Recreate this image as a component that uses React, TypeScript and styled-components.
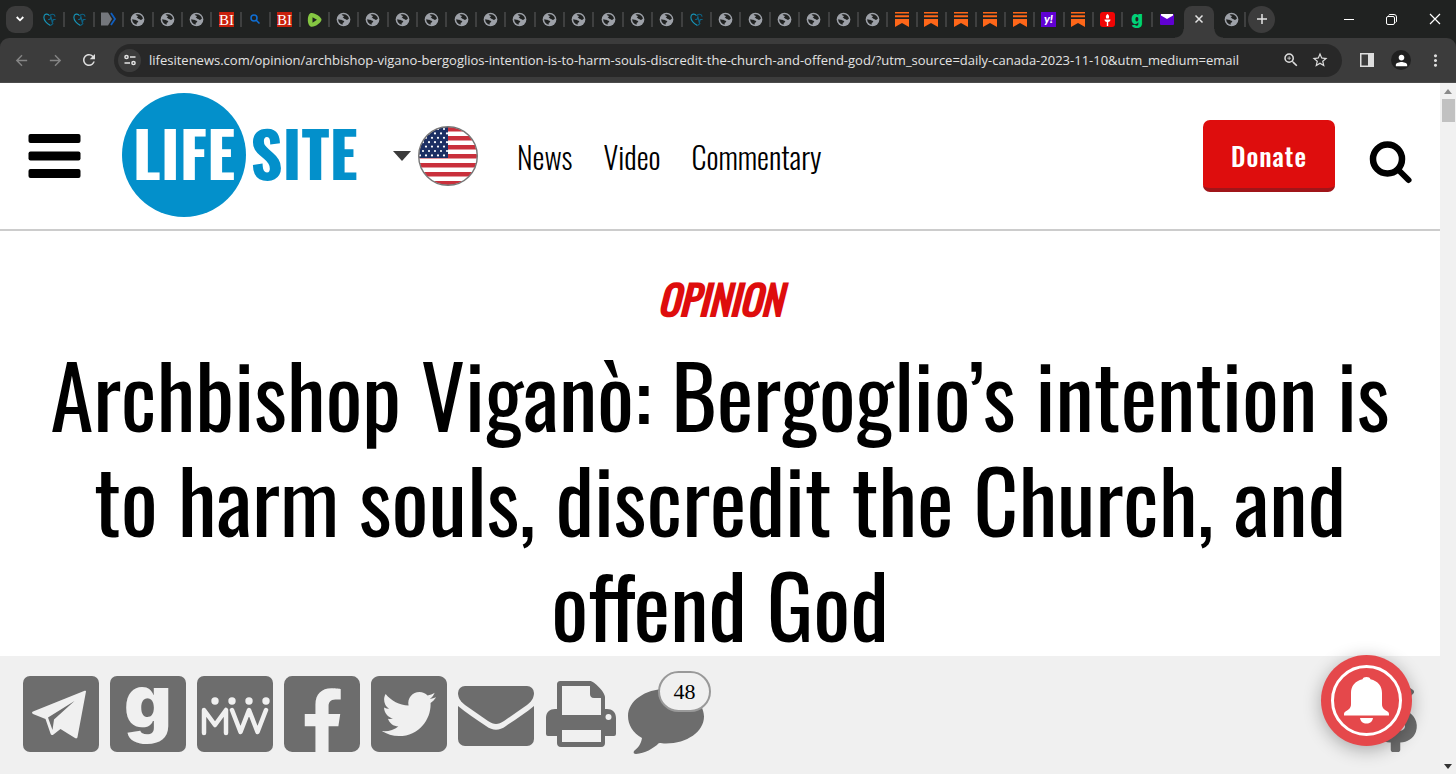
import React from "react";
import styled, { createGlobalStyle } from "styled-components";
import { FaFacebookSquare, FaTwitterSquare, FaDollarSign } from "react-icons/fa";
import { MdArrowBack, MdArrowForward, MdRefresh, MdStarBorder, MdZoomIn, MdMoreVert, MdPerson } from "react-icons/md";

const condensed = `Oswald, "Roboto Condensed", "Liberation Sans Narrow", "Arial Narrow", sans-serif`;
const ink = "#6d6d6d";
const paper = "#f0f0f0";

const GlobalStyle = createGlobalStyle`
  *, *::before, *::after { box-sizing: border-box; }
  body { margin: 0; background: #fff; color: #000; font-family: ${condensed}; }
  button { font: inherit; border: 0; padding: 0; background: none; color: inherit; cursor: pointer; }
  svg { display: block; overflow: visible; }
`;

const Window = styled.div`
  display: flex;
  flex-direction: column;
  height: 100vh;
  overflow: hidden;
`;

/* ---------- browser chrome ---------- */

const TabStrip = styled.div`
  display: flex;
  align-items: center;
  height: 38px;
  padding-left: 6px;
  background: #202221;
  color: #e3e3e3;
`;

const RoundButton = styled.button<{ $shape?: string }>`
  display: grid;
  place-items: center;
  flex: none;
  width: 27px;
  height: 27px;
  border-radius: ${(p) => p.$shape ?? "50%"};
  background: #3c3c3c;
`;

const TabRow = styled.div`
  display: flex;
  flex: 1;
  min-width: 0;
  margin: 0 2px 0 3px;
`;

const Tab = styled.button<{ $last?: boolean }>`
  display: grid;
  place-items: center;
  flex: 1 1 0;
  min-width: 0;
  height: 15px;
  border-right: 2px solid ${(p) => (p.$last ? "transparent" : "#3f4040")};
`;

const ActiveTab = styled.div`
  position: relative;
  display: grid;
  place-items: center;
  flex: none;
  align-self: flex-end;
  width: 30px;
  height: 32px;
  padding-bottom: 6px;
  border-radius: 8px 8px 0 0;
  background: #3c3c3c;
  &::before, &::after {
    content: "";
    position: absolute;
    bottom: 0;
    width: 9px;
    height: 9px;
  }
  &::before { right: 100%; background: radial-gradient(circle at 0 0, transparent 8px, #3c3c3c 9px); }
  &::after { left: 100%; background: radial-gradient(circle at 100% 0, transparent 8px, #3c3c3c 9px); }
`;

const TrailingTab = styled(Tab)`
  flex: none;
  width: 32px;
  padding-left: 4px;
  margin-right: 2px;
`;

const WindowControls = styled.div`
  display: flex;
  margin-left: 52px;
`;

const WindowControl = styled.button`
  display: grid;
  place-items: center;
  width: 43px;
  height: 38px;
`;

const ToolbarBack = styled.div`
  background: #202221;
`;

const Toolbar = styled.div`
  display: flex;
  align-items: center;
  height: 45px;
  padding: 0 4px 0 9px;
  border-radius: 9px 9px 0 0;
  border-bottom: 1px solid #4b4b4b;
  background: #3c3c3c;
  color: #dedede;
`;

const ToolButton = styled.button<{ $dim?: boolean; $wide?: boolean }>`
  display: grid;
  place-items: center;
  flex: none;
  width: ${(p) => (p.$wide ? "34px" : "24px")};
  height: 34px;
  color: ${(p) => (p.$dim ? "#858585" : "#dedede")};
`;

const NavTools = styled.div`
  display: flex;
  gap: 10px;
  margin-right: 13px;
`;

const AddressBar = styled.form`
  display: flex;
  align-items: center;
  flex: 1;
  min-width: 0;
  height: 33px;
  margin-right: 8px;
  padding: 0 10px 0 4px;
  border-radius: 17px;
  background: #282828;
`;

const SiteInfo = styled.button`
  display: grid;
  place-items: center;
  flex: none;
  width: 23px;
  height: 23px;
  border-radius: 50%;
  background: #3c3c3c;
`;

const AddressInput = styled.input`
  flex: 1;
  min-width: 0;
  margin-left: 8px;
  padding: 0;
  border: 0;
  outline: 0;
  background: none;
  color: #e3e3e3;
  font: 13px/20px "Open Sans", "Noto Sans", sans-serif;
`;

const Avatar = styled.span`
  display: grid;
  place-items: center;
  width: 20px;
  height: 20px;
  border-radius: 50%;
  background: #202020;
  color: #fff;
`;

/* ---------- page ---------- */

const Viewport = styled.div`
  display: grid;
  grid-template-columns: minmax(0, 1fr) 16px;
  flex: 1;
  min-height: 0;
`;

const Page = styled.div`
  display: flex;
  flex-direction: column;
  min-height: 0;
`;

const Scrollbar = styled.div`
  display: flex;
  flex-direction: column;
  align-items: center;
  padding: 6px 0 5px;
  background: #f1f1f1;
`;

const Thumb = styled.div`
  width: 13px;
  height: 23px;
  margin-top: 5px;
  margin-bottom: auto;
  background: #c1c1c1;
`;

const Header = styled.header`
  display: flex;
  align-items: center;
  flex: none;
  height: 148px;
  padding: 0 28px;
  border-bottom: 2px solid #ccc;
`;

const MenuButton = styled.button`
  margin-right: 41px;
`;

const RegionButton = styled.button`
  display: flex;
  align-items: center;
  gap: 7px;
  margin: 0 39px 0 33px;
`;

const MainNav = styled.nav`
  display: flex;
  gap: 31px;
  margin-right: auto;
  padding-top: 2px;
  font-size: 30px;
  line-height: 40px;
  font-weight: 300;
  a { color: #000; text-decoration: none; }
`;

const Donate = styled.button`
  width: 132px;
  height: 72px;
  margin-right: 34px;
  padding-top: 4px;
  border-radius: 7px;
  border-bottom: 4px solid #a01519;
  background: #de0d0d;
  color: #fff;
  font-size: 26px;
  line-height: 40px;
  font-weight: 500;
  letter-spacing: 1px;
`;

const SearchButton = styled.button`
  padding-top: 12px;
`;

const Article = styled.main`
  flex: 1;
  min-height: 0;
  overflow: hidden;
  padding: 39px 24px 0;
  text-align: center;
`;

const Category = styled.p`
  margin: 0;
  color: #de0d0d;
  font-size: 40px;
  line-height: 56px;
  font-weight: 400;
  font-style: italic;
  -webkit-text-stroke: 2px #de0d0d;
`;

const Headline = styled.h1`
  margin: 14px 0 0;
  font-size: 87px;
  line-height: 105px;
  font-weight: 400;
`;

const ShareBar = styled.footer`
  position: relative;
  display: flex;
  align-items: center;
  gap: 11px;
  flex: none;
  height: 118px;
  padding: 0 23px 2px;
  background: ${paper};
  color: ${ink};
  a { color: inherit; }
`;

const CommentLink = styled.a`
  position: relative;
  padding-top: 14px;
`;

const Count = styled.span`
  position: absolute;
  top: -3px;
  left: 30px;
  width: 53px;
  border: 2px solid #999;
  border-radius: 21px;
  background: ${paper};
  color: #000;
  text-align: center;
  font: 22px/37px "Liberation Serif", serif;
`;

const DonateLink = styled.a`
  margin-left: auto;
  svg { width: 43px; }
`;

const BellButton = styled.button`
  position: absolute;
  right: 28px;
  bottom: 28px;
  width: 91px;
  height: 91px;
  border-radius: 50%;
  background: #e5484b;
  box-shadow: 0 4px 18px rgba(0, 0, 0, 0.3);
`;

/* ---------- favicons ---------- */

const Globe = () => (
  <svg width="15" height="15" viewBox="0 0 16 16">
    <circle cx="8" cy="8" r="7.300" fill="#9da1a8" />
    <path d="M6 3C9 1.600 13.200 3.400 13.800 7l-1.500 1.300c-1 .4-1.800-.2-2.600-.8-.8-.5-2-.2-2.400-1-.3-.8 1.300-1.200 1-2C8 3.800 6.800 3.800 6 3zM2.300 7.800c1.700.6 3 .2 4.300 1 .8.5 2.400.6 2.200 1.700-.2.9-1.500.8-1.700 1.700l-.1 1.500C4.200 13 2.300 10.800 2.300 7.800z" fill="#202221" />
  </svg>
);

const Heart = () => (
  <svg width="15" height="15" viewBox="0 0 16 16" fill="none" strokeWidth="1.200">
    <path d="M9 14.500C5 12 2 9 2 5.500 2 2 6 1 8 4" stroke="#1795b8" />
    <path d="M8 4c1.500-2.300 5.500-2.300 6 1M6.500 8h2l1-3 1.500 6.500L12 8h2.500M9 14.500l3-2.500" stroke="#0d6385" />
  </svg>
);

const Tag = () => (
  <svg width="16" height="14" viewBox="0 0 16 14">
    <path d="M1 .5h7L12 7l-4 6.500H1z" fill="#74777c" />
    <path d="M11 1l4 6-4 6" fill="none" stroke="#0f5fc0" strokeWidth="1.800" />
  </svg>
);

const BI = () => (
  <svg width="15" height="15" viewBox="0 0 15 15">
    <rect width="15" height="15" fill="#c8200c" />
    <text x="7.500" y="12.500" textAnchor="middle" fontFamily="Liberation Serif, serif" fontWeight="400" fontSize="15" fill="#fff">BI</text>
  </svg>
);

const SearchFav = () => (
  <svg width="10" height="10" viewBox="0 0 10 10" fill="none" stroke="#0f6fd6" strokeWidth="1.500">
    <circle cx="4" cy="4" r="3" />
    <path d="M6.200 6.200L9.500 9.500" />
  </svg>
);

const Rumble = () => (
  <svg width="15" height="16" viewBox="0 0 15 16">
    <path d="M3 1.500C6-.5 14 4.500 14.500 7.500c.3 3-7.500 8.500-11 7C0 13 0 3.500 3 1.500z" fill="#85c742" />
    <path d="M5.500 5.200L10 7.800l-4.500 3z" fill="#202221" />
  </svg>
);

const Substack = () => (
  <svg width="14" height="15" viewBox="0 0 14 15" fill="#ff6719">
    <path d="M0 0h14v1.500H0zM0 3.200h14v2H0zM0 7h14v8l-7-4-7 4z" />
  </svg>
);

const Yahoo = () => (
  <svg width="15" height="15" viewBox="0 0 15 15">
    <rect width="15" height="15" fill="#6001d2" />
    <text x="7.500" y="11" textAnchor="middle" fontFamily="Lato, sans-serif" fontWeight="900" fontStyle="italic" fontSize="12" fill="#fff">y!</text>
  </svg>
);

const Torch = () => (
  <svg width="15" height="15" viewBox="0 0 15 15">
    <rect width="15" height="15" rx="3" fill="#f00505" />
    <path d="M7.500 2c1.800 1.300 2 3 1.200 4.500H6.300C5.500 5 5.700 3.300 7.500 2zM4.500 7.500h6c0 1.500-1 2.300-2.300 2.600V14H6.800v-3.900C5.500 9.800 4.500 9 4.500 7.500z" fill="#fff" />
  </svg>
);

const GabFav = () => (
  <svg width="14" height="17" viewBox="0 0 14 17">
    <text x="7" y="12" textAnchor="middle" fontFamily="Inter, sans-serif" fontWeight="900" fontSize="18" fill="#00d177">g</text>
  </svg>
);

const MailFav = () => (
  <svg width="14" height="11" viewBox="0 0 14 11">
    <rect width="14" height="11" rx="1" fill="#6001d2" />
    <path d="M1 0h12v1.500L7 5 1 1.500z" fill="#fff" />
  </svg>
);

type Favicon = { label: string; Icon: () => React.JSX.Element };
const repeat = (n: number, item: Favicon) => Array.from({ length: n }, () => item);
const globe = { label: "Web page", Icon: Globe };
const heart = { label: "Heart page", Icon: Heart };
const bi = { label: "BI", Icon: BI };
const substack = { label: "Substack", Icon: Substack };

const tabs: Favicon[] = [
  heart,
  heart,
  { label: "Tag", Icon: Tag },
  ...repeat(3, globe),
  bi,
  { label: "Search", Icon: SearchFav },
  bi,
  { label: "Rumble", Icon: Rumble },
  ...repeat(12, globe),
  heart,
  ...repeat(6, globe),
  ...repeat(5, substack),
  { label: "Yahoo", Icon: Yahoo },
  substack,
  { label: "Torch", Icon: Torch },
  { label: "Gab", Icon: GabFav },
  { label: "Mail", Icon: MailFav },
];

/* ---------- page drawings ---------- */

const Logo = () => (
  <svg width="238" height="124" viewBox="0 0 238 124" role="img" aria-label="LifeSite">
    <circle cx="62" cy="61" r="62" fill="#0390cb" />
    <g fontFamily={condensed} fontWeight="700" fontSize="63">
      <text x="62" y="86" textAnchor="middle" fill="#fff">LIFE</text>
      <text x="182" y="86" textAnchor="middle" fill="#0390cb">SITE</text>
    </g>
  </svg>
);

const Flag = () => (
  <svg width="60" height="60" viewBox="0 0 60 60">
    <defs>
      <clipPath id="flag"><circle cx="30" cy="30" r="29" /></clipPath>
    </defs>
    <g clipPath="url(#flag)">
      <rect width="60" height="60" fill="#fff" />
      {[1, 10, 19, 28, 37, 46, 55].map((y) => (
        <rect key={y} y={y} width="60" height="4.500" fill="#c9303c" />
      ))}
      <rect width="30" height="32" fill="#1c2f63" />
      {[0, 1, 2, 3, 4, 5, 6].flatMap((r) =>
        [0, 1, 2, 3, 4].map((c) => (
          <circle key={`${r}-${c}`} cx={2 + c * 6 + (r % 2) * 3} cy={3 + r * 4.400} r="1.100" fill="#fff" />
        ))
      )}
    </g>
    <circle cx="30" cy="30" r="29.300" fill="none" stroke="#777" strokeWidth="1.400" />
  </svg>
);

const Telegram = () => (
  <svg width="76" height="76" viewBox="0 0 76 76">
    <rect width="76" height="76" rx="7" fill={ink} />
    <path d="M63 15.500L54.500 61c-.3 1.500-1.300 1.800-2.500 1.100L37.500 53l-7 5.500c-1.500 1-2.500.5-3-1L22.500 43 10 38c-1.300-.6-1.300-1.800 0-2.400L61 15c1.300-.5 2.200-.2 2 .500z" fill={paper} />
    <path d="M51.500 25L25 41.500l4.500 12.500L31 43.500z" fill={ink} />
  </svg>
);

const Gab = () => (
  <svg width="76" height="76" viewBox="0 0 76 76">
    <rect width="76" height="76" rx="7" fill={ink} />
    <text x="38" y="52" textAnchor="middle" fontFamily="Inter, sans-serif" fontWeight="900" fontSize="74" fill={paper}>g</text>
  </svg>
);

const MeWe = () => (
  <svg width="76" height="76" viewBox="0 0 76 76">
    <rect width="76" height="76" rx="7" fill={ink} />
    <g fill={paper}>
      <circle cx="18" cy="25" r="3.700" />
      <circle cx="35" cy="25" r="3.700" />
      <circle cx="52" cy="25" r="3.700" />
      <circle cx="69" cy="25" r="3.700" />
    </g>
    <path d="M7 57V34l11 15 11-15v23M35 34l8.500 22L52 34l8.500 22L69 34" fill="none" stroke={paper} strokeWidth="4.500" strokeLinecap="round" strokeLinejoin="round" />
  </svg>
);

const Envelope = () => (
  <svg width="76" height="64" viewBox="0 -4 76 64" fill={ink}>
    <path d="M7 0h62a7 7 0 0 1 7 7c0 5-3 9-7 12L46 35c-6 4-10 4-16 0L7 19C3 16 0 12 0 7a7 7 0 0 1 7-7z" />
    <path d="M0 20c8 7 18 13 28 20 7 5 13 5 20 0 10-7 20-13 28-20v33a7 7 0 0 1-7 7H7a7 7 0 0 1-7-7z" />
  </svg>
);

const Printer = () => (
  <svg width="72" height="66" viewBox="0 0 72 66">
    <path d="M16 0h29c4 0 15 11 15 16v12h2c5 0 9 3 9 9v16a2 2 0 0 1-2 2h-9v7c0 2-1 4-4 4H16c-3 0-4-2-4-4v-7H3a2 2 0 0 1-2-2V37c0-6 4-9 9-9h2V4c0-3 1-4 4-4z" fill={ink} />
    <path d="M17 5h28v8c0 2 1 4 4 4h7v17H17zM17 49h39v12H17z" fill={paper} />
    <circle cx="63.500" cy="36" r="3" fill={paper} />
  </svg>
);

const Comment = () => (
  <svg width="76" height="66" viewBox="0 0 76 66" fill={ink}>
    <path d="M38 1C17 1 0 13 0 28c0 9 5 17 14 22-1 6-4 10-8 13-1 2 0 3 2 3 9-1 17-5 23-11 2 .4 4 .4 7 .4 21 0 38-12 38-27S59 1 38 1z" />
  </svg>
);

const Bell = () => (
  <svg width="91" height="91" viewBox="0 0 91 91">
    <circle cx="45.500" cy="45.500" r="34" fill="none" stroke="#fff" strokeWidth="3" />
    <path d="M45.500 22c2.200 0 3.500.8 4 2.200C57 26 61 31 61 38v11c0 4 2 5.500 5.500 7.500 1.500 1 1.500 1.500 1.500 4H23c0-2.500 0-3 1.500-4C28 54.500 30 53 30 49V38c0-7 4-12 11.500-13.800.5-1.400 1.800-2.200 4-2.200zM39 63h13c-.8 4-3 5.500-6.500 5.500S39.800 67 39 63z" fill="#fff" />
  </svg>
);

export default function App() {
  return (
    <Window>
      <GlobalStyle />
      <TabStrip>
        <RoundButton $shape="9px" aria-label="Search tabs">
          <svg width="8" height="6" viewBox="0 0 8 6" fill="none" stroke="#fff" strokeWidth="1.800"><path d="M.7 1L4 4.300 7.300 1" /></svg>
        </RoundButton>
        <TabRow>
          {tabs.map(({ label, Icon }, i) => (
            <Tab key={i} aria-label={label} $last={i === tabs.length - 1}>
              <Icon />
            </Tab>
          ))}
        </TabRow>
        <ActiveTab>
          <button aria-label="Close tab">
            <svg width="8" height="8" viewBox="0 0 8 8" stroke="#e3e3e3" strokeWidth="1.500"><path d="M.5.500l7 7M7.500.500l-7 7" /></svg>
          </button>
        </ActiveTab>
        <TrailingTab aria-label="Web page"><Globe /></TrailingTab>
        <RoundButton aria-label="New tab">
          <svg width="10" height="10" viewBox="0 0 10 10" stroke="#e3e3e3" strokeWidth="1.500"><path d="M5 0v10M0 5h10" /></svg>
        </RoundButton>
        <WindowControls>
          <WindowControl aria-label="Minimize">
            <svg width="10" height="10" viewBox="0 0 10 10" stroke="#fff"><path d="M0 5.500h10" /></svg>
          </WindowControl>
          <WindowControl aria-label="Restore">
            <svg width="11" height="11" viewBox="0 0 11 11" fill="none" stroke="#fff"><rect x=".5" y="2.500" width="8" height="8" rx="1.500" /><path d="M2.500 1.500c.3-.7.800-1 1.500-1h4a2.500 2.500 0 0 1 2.500 2.500v4c0 .7-.3 1.200-1 1.500" /></svg>
          </WindowControl>
          <WindowControl aria-label="Close">
            <svg width="10" height="10" viewBox="0 0 10 10" stroke="#fff" strokeWidth="1.200"><path d="M0 0l10 10M10 0L0 10" /></svg>
          </WindowControl>
        </WindowControls>
      </TabStrip>
      <ToolbarBack>
        <Toolbar>
          <NavTools>
            <ToolButton $dim aria-label="Back"><MdArrowBack size={17} /></ToolButton>
            <ToolButton $dim aria-label="Forward"><MdArrowForward size={17} /></ToolButton>
            <ToolButton aria-label="Reload"><MdRefresh size={18} /></ToolButton>
          </NavTools>
          <AddressBar onSubmit={(e) => e.preventDefault()}>
            <SiteInfo type="button" aria-label="Site information">
              <svg width="12" height="12" viewBox="0 0 12 12" fill="none" stroke="#e3e3e3" strokeWidth="1.500"><circle cx="2.500" cy="3" r="1.600" /><path d="M6 3h5.500M.5 9H6" /><circle cx="9.500" cy="9" r="1.600" /></svg>
            </SiteInfo>
            <AddressInput aria-label="Address" defaultValue="lifesitenews.com/opinion/archbishop-vigano-bergoglios-intention-is-to-harm-souls-discredit-the-church-and-offend-god/?utm_source=daily-canada-2023-11-10&utm_medium=email" />
            <ToolButton type="button" $wide aria-label="Zoom"><MdZoomIn size={18} /></ToolButton>
            <ToolButton type="button" aria-label="Bookmark"><MdStarBorder size={18} /></ToolButton>
          </AddressBar>
          <ToolButton $wide aria-label="Side panel">
            <svg width="14" height="14" viewBox="0 0 14 14" fill="#dedede"><path d="M0 0h14v14H0zM1.500 1.500v11H8v-11z" fillRule="evenodd" /></svg>
          </ToolButton>
          <ToolButton $wide aria-label="Profile"><Avatar><MdPerson size={17} /></Avatar></ToolButton>
          <ToolButton $wide aria-label="Menu"><MdMoreVert size={19} /></ToolButton>
        </Toolbar>
      </ToolbarBack>

      <Viewport>
        <Page>
          <Header>
            <MenuButton aria-label="Menu">
              <svg width="53" height="44" viewBox="0 0 53 44"><rect x=".5" y="0" width="52" height="9" rx="2" /><rect x=".5" y="17.500" width="52" height="9" rx="2" /><rect x=".5" y="35" width="52" height="9" rx="2" /></svg>
            </MenuButton>
            <Logo />
            <RegionButton aria-label="Choose region">
              <svg width="18" height="10" viewBox="0 0 18 10"><path d="M0 0h18L9 10z" fill="#3b3b3b" /></svg>
              <Flag />
            </RegionButton>
            <MainNav>
              <a href="#news">News</a>
              <a href="#video">Video</a>
              <a href="#commentary">Commentary</a>
            </MainNav>
            <Donate>Donate</Donate>
            <SearchButton aria-label="Search">
              <svg width="43" height="43" viewBox="0 0 43 43" fill="none" stroke="#000"><circle cx="18.500" cy="18" r="14.500" strokeWidth="6.500" /><path d="M29.500 29l10 10" strokeWidth="6" strokeLinecap="round" /></svg>
            </SearchButton>
          </Header>
          <Article>
            <Category>OPINION</Category>
            <Headline>Archbishop Viganò: Bergoglio’s intention is to harm souls, discredit the Church, and offend God</Headline>
          </Article>
          <ShareBar>
            <a href="#telegram" aria-label="Telegram"><Telegram /></a>
            <a href="#gab" aria-label="Gab"><Gab /></a>
            <a href="#mewe" aria-label="MeWe"><MeWe /></a>
            <a href="#facebook" aria-label="Facebook"><FaFacebookSquare size={76} viewBox="0 32 448 448" /></a>
            <a href="#twitter" aria-label="Twitter"><FaTwitterSquare size={76} viewBox="0 32 448 448" /></a>
            <a href="#email" aria-label="Email"><Envelope /></a>
            <a href="#print" aria-label="Print"><Printer /></a>
            <CommentLink href="#comments">
              <Comment />
              <Count>48</Count>
            </CommentLink>
            <DonateLink href="#donate" aria-label="Donate"><FaDollarSign size={76} viewBox="0 0 288 512" /></DonateLink>
            <BellButton aria-label="Notifications"><Bell /></BellButton>
          </ShareBar>
        </Page>
        <Scrollbar>
          <svg width="8" height="5" viewBox="0 0 8 5"><path d="M4 0l4 5H0z" fill="#8a8a8a" /></svg>
          <Thumb />
          <svg width="8" height="5" viewBox="0 0 8 5"><path d="M0 0h8L4 5z" fill="#333" /></svg>
        </Scrollbar>
      </Viewport>
    </Window>
  );
}
